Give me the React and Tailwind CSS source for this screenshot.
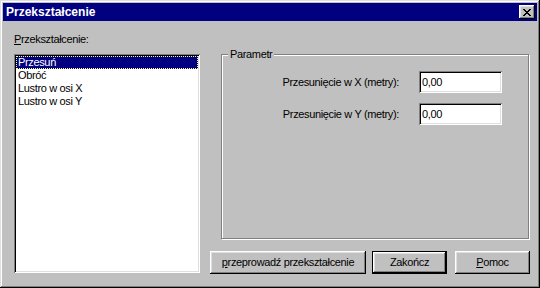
import React from "react";

const raised =
  "shadow-[inset_-1px_-1px_#000,inset_1px_1px_#fff,inset_-2px_-2px_#808080,inset_2px_2px_#dfdfdf]";
const sunken =
  "shadow-[inset_1px_1px_#808080,inset_-1px_-1px_#fff,inset_2px_2px_#000,inset_-2px_-2px_#dfdfdf]";

function Btn({ children, w, isDefault }) {
  if (isDefault) {
    return (
      <div className={`h-[23px] border border-black ${w}`}>
        <div className={`h-full w-full flex items-center justify-center ${raised}`}>{children}</div>
      </div>
    );
  }
  return (
    <div className={`h-[23px] flex items-center justify-center ${raised} ${w}`}>{children}</div>
  );
}

function Field({ label }) {
  return (
    <div className="flex items-center justify-end gap-[20px] pr-[26px]">
      <span>{label}</span>
      <div className={`w-[83px] h-[22px] bg-white flex items-center pl-[3px] ${sunken}`}>0,00</div>
    </div>
  );
}

export default function App() {
  const items = ["Przesuń", "Obróć", "Lustro w osi X", "Lustro w osi Y"];
  return (
    <div
      className="w-[540px] h-[288px] bg-[#c0c0c0] p-[3px] flex flex-col text-[11px] leading-[13px] tracking-[-0.35px] text-black shadow-[inset_-1px_-1px_#000,inset_1px_1px_#dfdfdf,inset_-2px_-2px_#808080,inset_2px_2px_#fff]"
      style={{ fontFamily: '"Liberation Sans", Arial, sans-serif' }}
    >
      <div className="h-[18px] bg-[#000080] flex items-center justify-between pl-[3px] pr-[2px]">
        <span className="text-white font-bold text-[12px] tracking-normal">Przekształcenie</span>
        <div className={`w-[16px] h-[14px] bg-[#c0c0c0] flex items-center justify-center ${raised}`}>
          <svg width="8" height="7" viewBox="0 0 8 7" shapeRendering="crispEdges">
            <path
              d="M0 0h2v1h-2zM6 0h2v1h-2zM1 1h2v1h-2zM5 1h2v1h-2zM2 2h4v1h-4zM3 3h2v1h-2zM2 4h4v1h-4zM1 5h2v1h-2zM5 5h2v1h-2zM0 6h2v1h-2zM6 6h2v1h-2z"
              fill="#000"
            />
          </svg>
        </div>
      </div>
      <div className="flex pl-[11px] pt-[12px]">
        <div className="w-[186px] flex flex-col">
          <span>
            <span className="underline">P</span>rzekształcenie:
          </span>
          <div className={`mt-[8px] h-[219px] bg-white p-[2px] ${sunken}`}>
            {items.map((it, i) => (
              <div
                key={it}
                className={
                  i === 0
                    ? "h-[13px] bg-[#000080] text-white border border-dotted border-[#ffff80] pl-[1px] leading-[11px]"
                    : "h-[13px] pl-[2px]"
                }
              >
                {it}
              </div>
            ))}
          </div>
        </div>
        <div className="ml-[10px] flex flex-col pt-[21px]">
          <div className="ml-[11px] w-[308px] h-[185px] relative border border-[#808080] shadow-[1px_1px_0_#fff,inset_1px_1px_0_#fff] flex flex-col gap-[10px] pt-[16px]">
            <span className="absolute left-[6px] top-[-7px] bg-[#c0c0c0] px-[2px]">Parametr</span>
            <Field label="Przesunięcie w X (metry):" />
            <Field label="Przesunięcie w Y (metry):" />
          </div>
          <div className="mt-[12px] flex">
            <Btn w="w-[156px]">
              <span>
                <span className="underline">p</span>rzeprowadź przekształcenie
              </span>
            </Btn>
            <div className="ml-[6px]">
              <Btn w="w-[75px]" isDefault>
                Zakończ
              </Btn>
            </div>
            <div className="ml-[8px]">
              <Btn w="w-[75px]">
                <span>
                  <span className="underline">P</span>omoc
                </span>
              </Btn>
            </div>
          </div>
        </div>
      </div>
    </div>
  );
}
